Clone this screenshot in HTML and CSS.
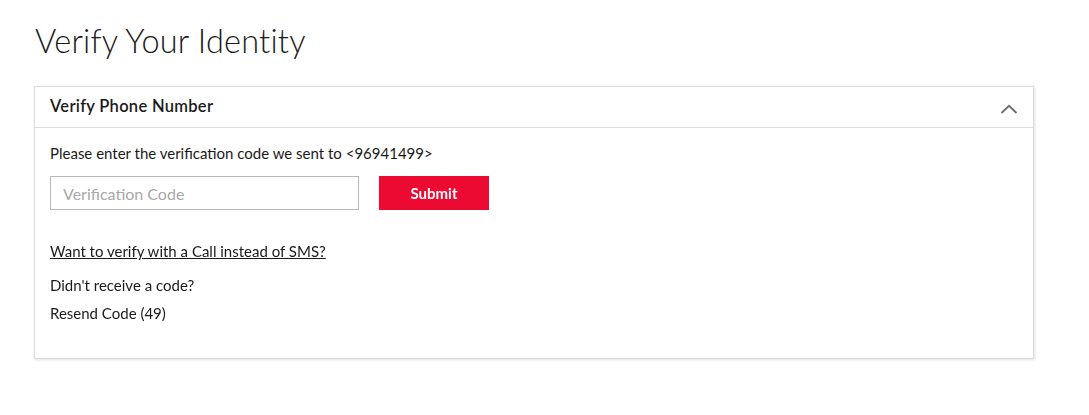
FILE: index.html
```html
<!DOCTYPE html>
<html lang="en">
  <head>
    <meta charset="UTF-8" />
    <meta name="viewport" content="width=device-width, initial-scale=1.0" />
    <title>Verify Your Identity</title>
    <link rel="stylesheet" href="styles.css">
  </head>
  <body>
    <div class="page">
      <h1 class="title">Verify Your Identity</h1>

      <div class="card">
        <div class="card-header">
          <h2>Verify Phone Number</h2>
          <svg class="chevron" width="18" height="10" viewBox="0 0 18 10">
            <path d="M1.5 9 L9 1.8 L16.5 9" fill="none" stroke="#6b6b6b" stroke-width="1.8" />
          </svg>
        </div>

        <div class="card-body">
          <p class="intro">Please enter the verification code we sent to &lt;96941499&gt;</p>

          <form class="code-form">
            <input type="text" class="code-input" placeholder="Verification Code" autofocus />
            <button type="button" class="submit">Submit</button>
          </form>

          <a href="#" class="call-link">Want to verify with a Call instead of SMS?</a>

          <p class="resend">Didn't receive a code?</p>
          <p class="resend">Resend Code (49)</p>
        </div>
      </div>
    </div>
  </body>
</html>
```

FILE: styles.css
```css
:root {
  --text: #1a1a1a;
  --border: #dcdcdc;
  --placeholder: #a8a8a8;
  --red: #ec0a32;
  --sm: 15px;
  --md: 16.5px;
}
body {
  margin: 0;
  font-family: "Lato", sans-serif;
  color: var(--text);
}
.page {
  padding: 21px 34px;
}
.title {
  font-size: 32.5px;
  font-weight: 300;
  margin: 0 0 25px 1px;
  line-height: 40px;
  letter-spacing: 0.2px;
}
.card {
  width: 998px;
  border: 1px solid var(--border);
  box-shadow: 1px 1px 3px rgba(0, 0, 0, 0.12);
}
.card-header {
  display: flex;
  justify-content: space-between;
  align-items: center;
  height: 40px;
  padding: 0 15px 0 15px;
  border-bottom: 1px solid var(--border);
}
.card-header h2 {
  margin: 0 0 2px;
  font-size: var(--md);
  font-weight: 600;
  letter-spacing: 0.3px;
}
.chevron {
  margin-top: 3px;
}
.card-body {
  display: flex;
  flex-direction: column;
  align-items: flex-start;
  padding: 15px 15px 35px;
  font-size: var(--sm);
  line-height: 20px;
}
.intro {
  margin: 0 0 13px;
}
.code-form {
  display: flex;
  gap: 20px;
  margin-bottom: 31px;
}
.code-input {
  box-sizing: border-box;
  width: 309px;
  height: 34px;
  padding: 0 12px;
  border: 1px solid #b9b9b9;
  font-family: inherit;
  font-size: 16px;
  color: var(--text);
  outline: none;
}
.code-input::placeholder {
  color: var(--placeholder);
}
.submit {
  width: 110px;
  height: 34px;
  border: none;
  background-color: var(--red);
  color: #ffffff;
  font-family: inherit;
  font-size: 15px;
  font-weight: 700;
}
.call-link {
  color: var(--text);
  margin-bottom: 14px;
}
.resend {
  margin: 0 0 8px;
}
.resend:last-child {
  margin-bottom: 0;
}
```
